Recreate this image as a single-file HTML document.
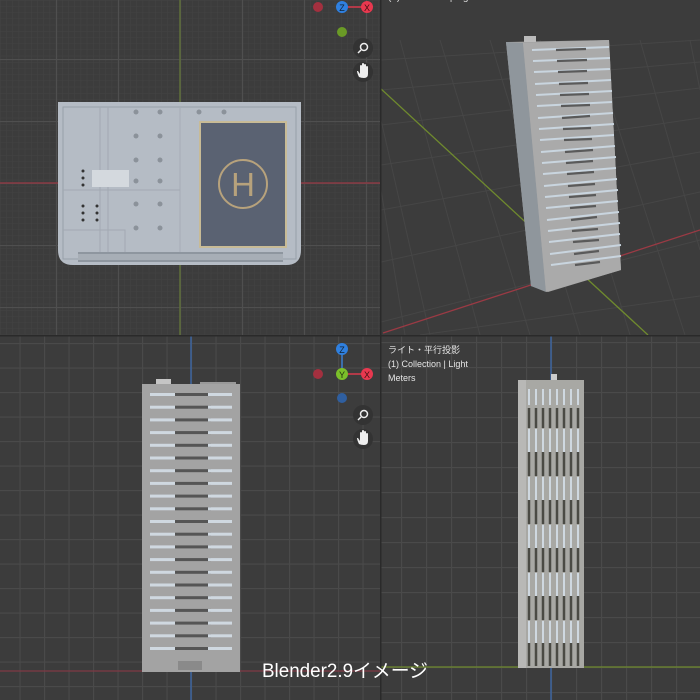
<!DOCTYPE html>
<html><head><meta charset="utf-8"><style>
html,body{margin:0;padding:0;background:#3d3d3d;}
svg{display:block}
</style></head><body>
<svg width="700" height="700" viewBox="0 0 700 700" xmlns="http://www.w3.org/2000/svg" font-family="Liberation Sans, Noto Sans CJK JP, sans-serif">
<defs>
<pattern id="tlf" x="0" y="0" width="6.2" height="6.2" patternUnits="userSpaceOnUse"><path d="M0 0H6.2M0 0V6.2" stroke="#434343" stroke-width="1"/></pattern>
<pattern id="tlm" x="56" y="59" width="62" height="62" patternUnits="userSpaceOnUse"><path d="M0 0.5H62M0.5 0V62" stroke="#4f4f4f" stroke-width="1.2"/></pattern>
<pattern id="blg" x="191" y="0" width="24.5" height="24.5" patternUnits="userSpaceOnUse"><path d="M0 0.5H24.5M0.5 0V24.5" stroke="#4a4a4a" stroke-width="1.2"/></pattern>
<pattern id="brg" x="551" y="17" width="25" height="25" patternUnits="userSpaceOnUse"><path d="M0 0.5H25M0.5 0V25" stroke="#4a4a4a" stroke-width="1.2"/></pattern>
<clipPath id="ctr"><rect x="381" y="0" width="319" height="335"/></clipPath>
<g id="hand"><path d="M-4 5Q-6 1-6 -1L-5 -1L-3 2L-3 -6Q-3 -7-2 -7Q-1 -7-1 -6L-1 -1L-1 -8Q-1 -9 0 -9Q1 -9 1 -8L1 -1L1 -7Q1 -8 2 -8Q3 -8 3 -7L3 -1L3 -5Q3 -6 4 -6Q5 -6 5 -5L5 2Q5 6 1 6Q-2 6-4 5Z" fill="#eee"/></g>
</defs>
<!-- top-left -->
<rect x="0" y="0" width="380" height="335" fill="#3c3c3c"/>
<rect x="0" y="0" width="380" height="335" fill="url(#tlf)"/>
<rect x="0" y="0" width="380" height="335" fill="url(#tlm)"/>
<line x1="0" y1="183" x2="380" y2="183" stroke="#8a3a44" stroke-width="1.5"/>
<line x1="180" y1="0" x2="180" y2="335" stroke="#5f6f3a" stroke-width="1.5"/>
<path d="M58 102H301V250Q301 265 286 265H73Q58 265 58 250Z" fill="#b5bcc5"/>
<rect x="63" y="107" width="233" height="152" fill="none" stroke="#98a0a9"/>
<line x1="180" y1="107" x2="180" y2="252" stroke="#a6adb6"/>
<path d="M100 107V252M108 107V252M63 190H180M63 230H125V252" fill="none" stroke="#a2a9b2"/>
<rect x="78" y="252" width="205" height="10" fill="#8e969f"/>
<rect x="78" y="254" width="205" height="6" fill="#a7aeb6"/>
<rect x="92" y="170" width="37" height="17" fill="#d4d9de"/>
<rect x="200" y="122" width="86" height="125" fill="#5a6272" stroke="#c8bb96" stroke-width="2"/>
<circle cx="243" cy="184" r="24" fill="none" stroke="#b7a27c" stroke-width="2"/>
<text x="243" y="196" text-anchor="middle" font-size="33" fill="#b7a27c">H</text>
<g fill="#8b929a">
<circle cx="136" cy="112" r="2.5"/><circle cx="160" cy="112" r="2.5"/><circle cx="199" cy="112" r="2.5"/><circle cx="224" cy="112" r="2.5"/>
<circle cx="136" cy="136" r="2.5"/><circle cx="160" cy="136" r="2.5"/>
<circle cx="136" cy="160" r="2.5"/><circle cx="160" cy="160" r="2.5"/>
<circle cx="136" cy="181" r="2.5"/><circle cx="160" cy="181" r="2.5"/>
<circle cx="136" cy="204" r="2.5"/><circle cx="160" cy="204" r="2.5"/>
<circle cx="136" cy="228" r="2.5"/><circle cx="160" cy="228" r="2.5"/>
</g>
<g fill="#333"><circle cx="83" cy="171" r="1.5"/><circle cx="83" cy="178" r="1.5"/><circle cx="83" cy="185" r="1.5"/><circle cx="83" cy="206" r="1.5"/><circle cx="83" cy="213" r="1.5"/><circle cx="83" cy="220" r="1.5"/><circle cx="97" cy="206" r="1.5"/><circle cx="97" cy="213" r="1.5"/><circle cx="97" cy="220" r="1.5"/></g>
<circle cx="318" cy="7" r="5" fill="#a3303f"/>
<line x1="342" y1="7" x2="367" y2="7" stroke="#d8394c" stroke-width="1.5"/>
<circle cx="342" cy="7" r="6" fill="#2f80e0"/><text x="342" y="11" text-anchor="middle" font-size="9" fill="#123">Z</text>
<circle cx="367" cy="7" r="6" fill="#e8384f"/><text x="367" y="11" text-anchor="middle" font-size="9" fill="#411">X</text>
<circle cx="342" cy="32" r="5" fill="#6a9a26"/>
<circle cx="363" cy="48" r="10" fill="#333"/><circle cx="364" cy="47" r="3.5" fill="none" stroke="#eee" stroke-width="1.5"/><line x1="361" y1="50" x2="358" y2="53" stroke="#eee" stroke-width="1.5"/>
<circle cx="363" cy="72" r="10" fill="#333"/><use href="#hand" x="363" y="72"/>
<!-- top-right -->
<rect x="381" y="0" width="319" height="335" fill="#3c3c3c"/>
<g clip-path="url(#ctr)" stroke="#464646" stroke-width="1">
<path d="M381 60L700 40M381 90L700 62M381 125L700 88M381 165L700 118M381 210L700 152M381 262L700 192M381 322L700 240M420 335L700 296"/>
<path d="M381 120L430 335M381 190L405 335M400 40L480 335M440 40L530 335M490 40L580 335M540 40L630 335M590 40L685 335M640 40L700 250M690 40L700 90"/>
<line x1="380" y1="88" x2="648" y2="335" stroke="#6f8a2e" stroke-width="1.3"/>
<line x1="383" y1="333" x2="700" y2="230" stroke="#9a3a44" stroke-width="1.3"/>
</g>
<text x="388" y="0" font-size="10" fill="#ddd">(1) Collection | Light</text>
<polygon points="506,42 609,40 621,270 548,292 531,286" fill="#a3a3a3"/>
<polygon points="506,42 523,43 546,292 531,286" fill="#8f969c"/>
<polygon points="523,43 609,40 621,270 546,292" fill="#aaaaaa"/>
<g stroke="#c9d5df" stroke-width="2">
<path d="M532 50L609 47M533 61L610 58M534 72L610 69M535 84L611 80M536 95L612 91M537 106L612 102M538 118L613 113M539 129L614 124M540 140L614 135M541 152L615 146M542 163L616 157M543 174L616 168M544 186L617 179M545 197L618 190M546 208L618 201M547 220L619 212M548 231L620 223M549 242L620 234M550 254L621 245M551 265L621 256"/>
</g>
<g stroke="#5a5a5a" stroke-width="2.2">
<path d="M556 50L586 49M557 61L587 60M558 72L587 71M559 84L588 83M560 95L589 94M561 106L590 105M562 118L590 116M563 129L591 128M564 140L592 139M565 152L593 150M566 163L593 161M567 174L594 172M568 186L595 184M569 197L596 195M570 208L596 206M571 220L597 217M572 231L598 229M573 242L599 240M574 254L599 251M575 265L600 262"/>
</g>
<rect x="524" y="36" width="12" height="6" fill="#bbb"/>
<!-- bottom-left -->
<rect x="0" y="336" width="380" height="364" fill="#3c3c3c"/>
<rect x="0" y="336" width="380" height="364" fill="url(#blg)"/>
<line x1="191" y1="336" x2="191" y2="700" stroke="#3d64a0" stroke-width="1.5"/>
<line x1="0" y1="671" x2="380" y2="671" stroke="#7f3944" stroke-width="1.3"/>
<rect x="156" y="379" width="15" height="7" fill="#c5c5c5"/>
<rect x="200" y="382" width="36" height="3" fill="#999"/>
<rect x="142" y="384" width="98" height="288" fill="#a3a3a3"/>
<g id="fl">
<rect x="150" y="393" width="25" height="3" fill="#cfd8e0"/>
<rect x="175" y="393" width="36" height="3" fill="#555"/>
<rect x="208" y="393" width="24" height="3" fill="#cfd8e0"/>
</g>
<use href="#fl" y="12.7"/><use href="#fl" y="25.4"/><use href="#fl" y="38.1"/><use href="#fl" y="50.8"/><use href="#fl" y="63.5"/><use href="#fl" y="76.2"/><use href="#fl" y="88.9"/><use href="#fl" y="101.6"/><use href="#fl" y="114.3"/><use href="#fl" y="127"/><use href="#fl" y="139.7"/><use href="#fl" y="152.4"/><use href="#fl" y="165.1"/><use href="#fl" y="177.8"/><use href="#fl" y="190.5"/><use href="#fl" y="203.2"/><use href="#fl" y="215.9"/><use href="#fl" y="228.6"/><use href="#fl" y="241.3"/><use href="#fl" y="254"/>
<rect x="178" y="661" width="24" height="9" fill="#8a8a8a"/>
<line x1="342" y1="351" x2="342" y2="374" stroke="#3b7ed0" stroke-width="1.5"/>
<line x1="342" y1="374" x2="367" y2="374" stroke="#d8394c" stroke-width="1.5"/>
<circle cx="318" cy="374" r="5" fill="#a3303f"/>
<circle cx="342" cy="349" r="6" fill="#2f80e0"/><text x="342" y="353" text-anchor="middle" font-size="9" fill="#123">Z</text>
<circle cx="342" cy="374" r="6" fill="#7bc02a"/><text x="342" y="378" text-anchor="middle" font-size="9" fill="#231">Y</text>
<circle cx="367" cy="374" r="6" fill="#e8384f"/><text x="367" y="378" text-anchor="middle" font-size="9" fill="#411">X</text>
<circle cx="342" cy="398" r="5" fill="#2f5fa0"/>
<circle cx="363" cy="415" r="10" fill="#333"/><circle cx="364" cy="414" r="3.5" fill="none" stroke="#eee" stroke-width="1.5"/><line x1="361" y1="417" x2="358" y2="420" stroke="#eee" stroke-width="1.5"/>
<circle cx="363" cy="439" r="10" fill="#333"/><use href="#hand" x="363" y="439"/>
<!-- bottom-right -->
<rect x="381" y="336" width="319" height="364" fill="#3c3c3c"/>
<rect x="381" y="336" width="319" height="364" fill="url(#brg)"/>
<line x1="551" y1="336" x2="551" y2="700" stroke="#3d64a0" stroke-width="1.5"/>
<line x1="381" y1="667" x2="700" y2="667" stroke="#6f8a2e" stroke-width="1.3"/>
<rect x="518" y="380" width="66" height="288" fill="#a8a8a4"/>
<rect x="518" y="380" width="8" height="288" fill="#b8b8b6"/>
<rect x="551" y="374" width="6" height="6" fill="#ccc"/>
<g stroke="#cfd8e0" stroke-width="2"><path d="M529 389V405M536 389V405M543 389V405M550 389V405M557 389V405M564 389V405M571 389V405M578 389V405"/></g>
<g stroke="#4a4a44" stroke-width="2.5"><path d="M529 408V428M536 408V428M543 408V428M550 408V428M557 408V428M564 408V428M571 408V428M578 408V428"/></g>
<g stroke="#cfd8e0" stroke-width="2"><path d="M529 429V452M536 429V452M543 429V452M550 429V452M557 429V452M564 429V452M571 429V452M578 429V452"/></g>
<g stroke="#4a4a44" stroke-width="2.5"><path d="M529 452V476M536 452V476M543 452V476M550 452V476M557 452V476M564 452V476M571 452V476M578 452V476"/></g>
<g stroke="#cfd8e0" stroke-width="2"><path d="M529 477V500M536 477V500M543 477V500M550 477V500M557 477V500M564 477V500M571 477V500M578 477V500"/></g>
<g stroke="#4a4a44" stroke-width="2.5"><path d="M529 500V524M536 500V524M543 500V524M550 500V524M557 500V524M564 500V524M571 500V524M578 500V524"/></g>
<g stroke="#cfd8e0" stroke-width="2"><path d="M529 525V548M536 525V548M543 525V548M550 525V548M557 525V548M564 525V548M571 525V548M578 525V548"/></g>
<g stroke="#4a4a44" stroke-width="2.5"><path d="M529 548V572M536 548V572M543 548V572M550 548V572M557 548V572M564 548V572M571 548V572M578 548V572"/></g>
<g stroke="#cfd8e0" stroke-width="2"><path d="M529 573V596M536 573V596M543 573V596M550 573V596M557 573V596M564 573V596M571 573V596M578 573V596"/></g>
<g stroke="#4a4a44" stroke-width="2.5"><path d="M529 596V620M536 596V620M543 596V620M550 596V620M557 596V620M564 596V620M571 596V620M578 596V620"/></g>
<g stroke="#cfd8e0" stroke-width="2"><path d="M529 621V643M536 621V643M543 621V643M550 621V643M557 621V643M564 621V643M571 621V643M578 621V643"/></g>
<g stroke="#4a4a44" stroke-width="2.5"><path d="M529 643V666M536 643V666M543 643V666M550 643V666M557 643V666M564 643V666M571 643V666M578 643V666"/></g>
<text x="388" y="353" font-size="9" fill="#e6e6e6">ライト・平行投影</text>
<text x="388" y="367" font-size="9" fill="#e6e6e6">(1) Collection | Light</text>
<text x="388" y="381" font-size="9" fill="#e6e6e6">Meters</text>
<rect x="380" y="0" width="1.5" height="700" fill="#2a2a2a"/>
<rect x="0" y="335" width="700" height="1.5" fill="#2a2a2a"/>
<text x="262" y="677" font-size="19" fill="#ffffff" textLength="166" lengthAdjust="spacingAndGlyphs">Blender2.9イメージ</text>
</svg>
</body></html>
